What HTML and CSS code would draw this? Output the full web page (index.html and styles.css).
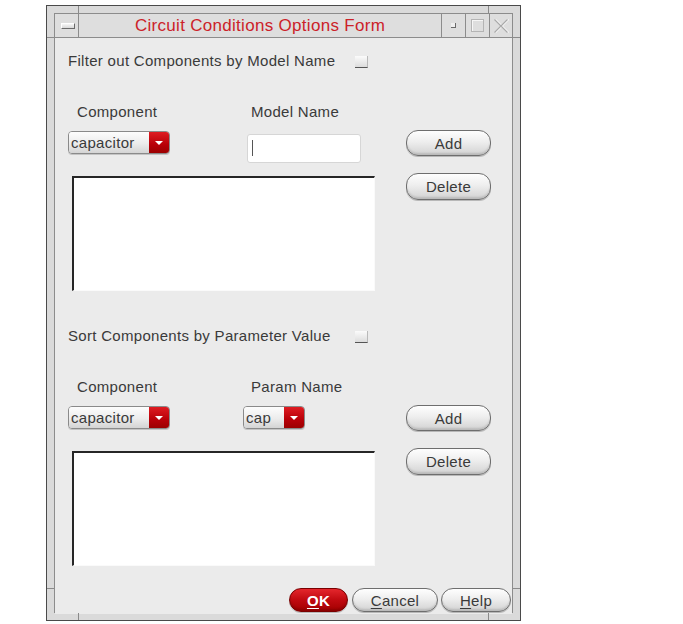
FILE: index.html
```html
<!DOCTYPE html>
<html lang="en">

<head>
    <meta charset="utf-8">
    <title>Circuit Conditions Options Form</title>
    <link rel="stylesheet" href="styles.css">
</head>

<body>
    <div class="window">
        <span class="tick tick-v tick-tl"></span>
        <span class="tick tick-v tick-tr"></span>
        <span class="tick tick-v tick-bl"></span>
        <span class="tick tick-v tick-br"></span>
        <span class="tick tick-h tick-lt"></span>
        <span class="tick tick-h tick-rt"></span>
        <span class="tick tick-h tick-lb"></span>
        <span class="tick tick-h tick-rb"></span>

        <div class="frame">
            <div class="titlebar">
                <div class="tb-menu"><span class="menu-bar"></span></div>
                <div class="tb-title">Circuit Conditions Options Form</div>
                <div class="tb-btn"><span class="min-dot"></span></div>
                <div class="tb-btn"><span class="max-box"></span></div>
                <div class="tb-btn tb-close">
                    <svg width="18" height="17" viewBox="0 0 18 17">
                        <path d="M2.5 2.5 L15.5 15.5 M15.5 2.5 L2.5 15.5" stroke="#ffffff" stroke-width="1.2" fill="none" transform="translate(1 0)"/>
                        <path d="M2.5 2.5 L15.5 15.5 M15.5 2.5 L2.5 15.5" stroke="#a9a9a9" stroke-width="1.2" fill="none"/>
                    </svg>
                </div>
            </div>

            <form class="content" id="conditionsForm">
                <!-- filter section -->
                <div class="section">
                    <div class="heading">
                        <span class="heading-text">Filter out Components by Model Name</span>
                        <span class="checkbox"></span>
                    </div>
                    <div class="row labels">
                        <span class="label">Component</span>
                        <span class="label">Model Name</span>
                    </div>
                    <div class="row controls">
                        <div class="dropdown dd-wide">
                            <span class="dd-value">capacitor</span>
                            <span class="dd-arrow"></span>
                        </div>
                        <div class="textbox"><span class="caret"></span></div>
                        <button type="button" class="pill btn-add">Add</button>
                    </div>
                    <div class="row lists">
                        <div class="listbox"></div>
                        <button type="button" class="pill btn-delete">Delete</button>
                    </div>
                </div>

                <!-- sort section -->
                <div class="section">
                    <div class="heading">
                        <span class="heading-text">Sort Components by Parameter Value</span>
                        <span class="checkbox"></span>
                    </div>
                    <div class="row labels">
                        <span class="label">Component</span>
                        <span class="label">Param Name</span>
                    </div>
                    <div class="row controls">
                        <div class="dropdown dd-wide">
                            <span class="dd-value">capacitor</span>
                            <span class="dd-arrow"></span>
                        </div>
                        <div class="dropdown dd-small">
                            <span class="dd-value">cap</span>
                            <span class="dd-arrow"></span>
                        </div>
                        <button type="button" class="pill btn-add">Add</button>
                    </div>
                    <div class="row lists">
                        <div class="listbox"></div>
                        <button type="button" class="pill btn-delete">Delete</button>
                    </div>
                </div>

                <div class="footer">
                    <button type="submit" class="pill btn-ok"><u>O</u>K</button>
                    <button type="button" class="pill btn-cancel"><u>C</u>ancel</button>
                    <button type="button" class="pill btn-help"><u>H</u>elp</button>
                </div>
            </form>
        </div>
    </div>
</body>

</html>
```

FILE: styles.css
```css
* {
    box-sizing: border-box;
    font-family: 'Liberation Sans', Arial, sans-serif;
}

body {
    background-color: #ffffff;
    margin: 0;
    padding: 5px 0 0 46px;
}

.window {
    position: relative;
    width: 475px;
    height: 616px;
    padding: 7px;
    border: 1px solid #4a4a4a;
    background-color: #dadada;
}

/* resize handle marks on the frame */
.tick {
    position: absolute;
    background-color: #8a8a8a;
}

.tick-v {
    width: 1px;
    height: 7px;
}

.tick-h {
    width: 7px;
    height: 1px;
}

.tick-tl { left: 31px; top: 0; }
.tick-tr { left: 441px; top: 0; }
.tick-bl { left: 31px; bottom: 0; }
.tick-br { left: 441px; bottom: 0; }
.tick-lt { left: 0; top: 31px; }
.tick-rt { right: 0; top: 31px; }
.tick-lb { left: 0; top: 582px; }
.tick-rb { right: 0; top: 582px; }

.frame {
    height: 100%;
    border: 1px solid #8c8c8c;
    display: flex;
    flex-direction: column;
}

.titlebar {
    height: 24px;
    display: flex;
    border-bottom: 1px solid #8c8c8c;
    background-color: #dedede;
}

.tb-menu {
    width: 24px;
    border-right: 1px solid #8c8c8c;
    display: flex;
    align-items: center;
    justify-content: center;
}

.menu-bar {
    width: 14px;
    height: 6px;
    margin-left: 2px;
    background: linear-gradient(#f7f7f7, #d8d8d8);
    border-top: 1px solid #ffffff;
    border-left: 1px solid #ffffff;
    border-right: 1px solid #6a6a6a;
    border-bottom: 1px solid #6a6a6a;
}

.tb-title {
    flex: 1;
    text-align: center;
    color: #cc2229;
    font-size: 17px;
    letter-spacing: 0.3px;
    line-height: 23px;
}

.tb-btn {
    width: 24px;
    border-left: 1px solid #8c8c8c;
    display: flex;
    align-items: center;
    justify-content: center;
}

.tb-close {
    width: 23px;
}

.min-dot {
    width: 5px;
    height: 5px;
    background-color: #efefef;
    border-right: 1px solid #6a6a6a;
    border-bottom: 1px solid #6a6a6a;
}

.max-box {
    width: 13px;
    height: 13px;
    border: 1px solid #b4b4b4;
    box-shadow: inset 1px 1px 0 #f6f6f6;
}

.content {
    flex: 1;
    margin: 0;
    display: flex;
    flex-direction: column;
    background-color: #ebebeb;
    color: #3a3a3a;
    font-size: 15px;
    letter-spacing: 0.3px;
}

.section {
    height: 275px;
    padding: 13px 0 0 13px;
}

.heading {
    display: flex;
    align-items: center;
    height: 20px;
    line-height: 20px;
}

.heading-text {
    width: 287px;
}

.checkbox {
    width: 13px;
    height: 12px;
    margin-top: 1px;
    background: linear-gradient(#fbfbfb, #dcdcdc);
    border-bottom: 1px solid #555555;
    border-right: 1px solid #b9b9b9;
}

.row {
    display: grid;
    grid-template-columns: 175px 163px 85px;
    align-items: start;
}

.labels {
    margin-top: 31px;
    line-height: 20px;
}

.label {
    padding-left: 9px;
}

.label + .label {
    padding-left: 8px;
}

.controls {
    margin-top: 8px;
    height: 33px;
}

.dropdown {
    display: flex;
    height: 23px;
    margin-top: 1px;
    border: 1px solid #8a8a8a;
    border-radius: 4px;
    overflow: hidden;
    box-shadow: 0 1px 0 #c4c4c4;
}

.dd-wide {
    width: 102px;
}

.dd-small {
    width: 62px;
}

.dd-value {
    flex: 1;
    padding-left: 2px;
    line-height: 21px;
    background: linear-gradient(#fdfdfd, #ececec 55%, #d4d4d4);
    color: #3a3a3a;
}

.dd-arrow {
    width: 20px;
    position: relative;
    background: linear-gradient(#de1c22, #b80008 60%, #9c0000);
}

.dd-arrow::after {
    content: '';
    position: absolute;
    left: 6px;
    top: 9px;
    border-left: 4px solid transparent;
    border-right: 4px solid transparent;
    border-top: 4px solid #ffffff;
}

.textbox {
    width: 114px;
    height: 29px;
    margin: 4px 0 0 4px;
    background-color: #ffffff;
    border: 1px solid #d6d6d6;
    border-radius: 3px;
    padding: 5px 0 0 4px;
}

.caret {
    display: block;
    width: 1px;
    height: 16px;
    background-color: #555555;
}

.pill {
    width: 85px;
    padding: 0;
    border: 1px solid #6e6e6e;
    border-radius: 12px;
    background: linear-gradient(#fefefe, #eeeeee 45%, #d2d2d2);
    box-shadow: inset 0 -2px 2px rgba(0, 0, 0, 0.12), 0 1px 0 #b8b8b8;
    color: #3a3a3a;
    font-size: 15px;
    letter-spacing: 0.3px;
    cursor: pointer;
}

.btn-add {
    height: 26px;
}

.btn-delete {
    height: 27px;
}

.lists {
    margin-top: 10px;
}

.listbox {
    grid-column: 1 / span 2;
    width: 303px;
    height: 115px;
    margin: 3px 0 0 4px;
    background-color: #ffffff;
    border-top: 2px solid #262626;
    border-left: 2px solid #262626;
    border-right: 1px solid #fafafa;
    border-bottom: 1px solid #fafafa;
}

.footer {
    margin-top: auto;
    display: flex;
    justify-content: flex-end;
    padding: 0 1px 2px 0;
}

.footer .pill {
    height: 24px;
}

.btn-ok {
    width: 59px;
    margin-right: 4px;
    border-color: #7a0000;
    background: linear-gradient(#e4262c, #c00a10 50%, #a20000);
    box-shadow: inset 0 -2px 2px rgba(0, 0, 0, 0.15), 0 1px 0 #b8b8b8;
    color: #ffffff;
    font-weight: bold;
}

.btn-ok u {
    color: #ffffff;
}

.btn-cancel {
    width: 86px;
    margin-right: 3px;
}

.btn-help {
    width: 70px;
}

u {
    text-underline-offset: 2px;
}
```
